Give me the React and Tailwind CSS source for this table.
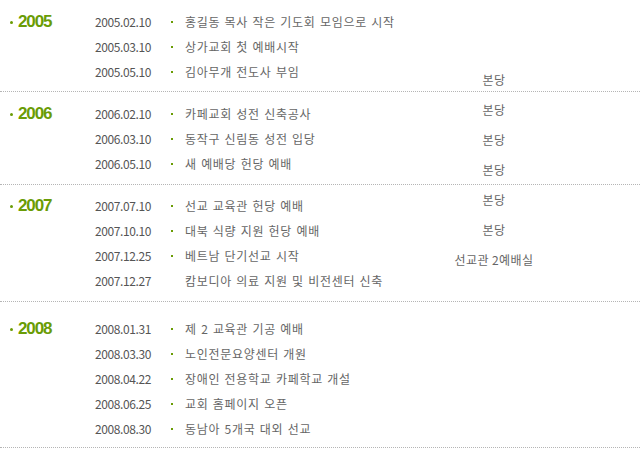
import React from "react";

const sections = [
  {
    year: "2005",
    pt: "pt-[9px]",
    pb: "pb-[7px]",
    rows: [
      ["2005.02.10", "홍길동 목사 작은 기도회 모임으로 시작", true],
      ["2005.03.10", "상가교회 첫 예배시작", true],
      ["2005.05.10", "김아무개 전도사 부임", true],
    ],
  },
  {
    year: "2006",
    pt: "pt-[9px]",
    pb: "pb-[8px]",
    rows: [
      ["2006.02.10", "카페교회 성전 신축공사", true],
      ["2006.03.10", "동작구 신림동 성전 입당", true],
      ["2006.05.10", "새 예배당 헌당 예배", true],
    ],
  },
  {
    year: "2007",
    pt: "pt-[8px]",
    pb: "pb-[8px]",
    rows: [
      ["2007.07.10", "선교 교육관 헌당 예배", true],
      ["2007.10.10", "대북 식량 지원 헌당 예배", true],
      ["2007.12.25", "베트남 단기선교 시작", true],
      ["2007.12.27", "캄보디아 의료 지원 및 비전센터 신축", false],
    ],
  },
  {
    year: "2008",
    pt: "pt-[14px]",
    pb: "pb-[6px]",
    rows: [
      ["2008.01.31", "제 2 교육관 기공 예배", true],
      ["2008.03.30", "노인전문요양센터 개원", true],
      ["2008.04.22", "장애인 전용학교 카페학교 개설", true],
      ["2008.06.25", "교회 홈페이지 오픈", true],
      ["2008.08.30", "동남아 5개국 대외 선교", true],
    ],
  },
];

const places = ["본당", "본당", "본당", "본당", "본당", "본당", "선교관 2예배실"];

export default function App() {
  return (
    <div
      className="relative w-[640px] h-[464px] bg-white overflow-hidden"
      style={{ fontFamily: '"Noto Sans CJK KR", "Liberation Sans", sans-serif' }}
    >
      {sections.map((s) => (
        <div
          key={s.year}
          className={`flex ${s.pt} ${s.pb} border-b border-dotted border-[#b5b5b5]`}
        >
          <div className="w-[95px] shrink-0 pl-[10px] h-[25px] flex items-center">
            <span className="w-[3px] h-[3px] bg-[#6a9c05] rounded-full mr-[5px] mt-[1px]" />
            <span
              className="text-[17px] font-bold text-[#6a9c05] tracking-[-1.1px]"
              style={{ fontFamily: '"Liberation Sans", Arial, sans-serif' }}
            >
              {s.year}
            </span>
          </div>
          <div className="flex flex-col">
            {s.rows.map(([d, t, b]) => (
              <div key={d} className="h-[25px] flex items-center text-[12px] leading-none">
                <span className="w-[76px] shrink-0 text-[#555] tracking-[-0.4px]">{d}</span>
                <span className="w-[14px] shrink-0 flex items-center">
                  {b && <span className="w-[2px] h-[2px] bg-[#6a9c05]" />}
                </span>
                <span className="text-[#666] tracking-[0.7px] [word-spacing:1px]">{t}</span>
              </div>
            ))}
          </div>
        </div>
      ))}
      <div className="absolute left-[434px] top-[65px] w-[120px] flex flex-col text-center text-[12px] leading-[30px] text-[#666] tracking-[0.4px]">
        {places.map((p, i) => (
          <span key={i}>{p}</span>
        ))}
      </div>
    </div>
  );
}
